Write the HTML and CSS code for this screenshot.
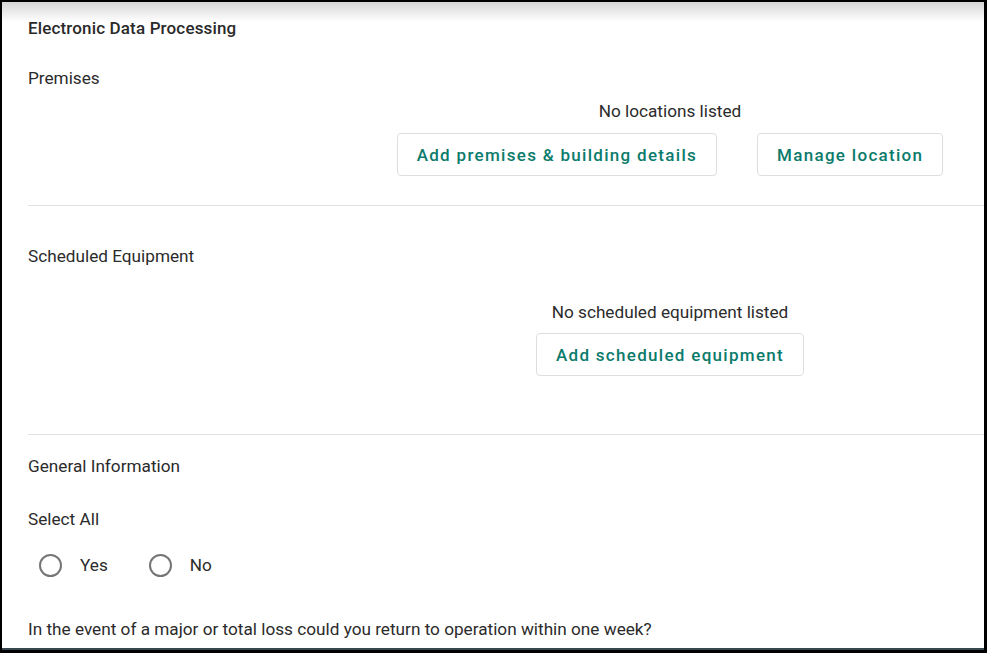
FILE: index.html
```html
<!DOCTYPE html>
<html lang="en">

<head>
    <meta charset="UTF-8">
    <meta name="viewport" content="width=device-width, initial-scale=1.0">
    <title>Electronic Data Processing</title>
    <link rel="stylesheet" href="styles.css">
</head>

<body>
    <div class="frame">
        <div class="page">
            <h1 class="title">Electronic Data Processing</h1>

            <!-- 场所 -->
            <section class="section premises">
                <div class="label">Premises</div>
                <div class="listing">
                    <p class="empty">No locations listed</p>
                    <div class="actions">
                        <button class="btn">Add premises &amp; building details</button>
                        <button class="btn">Manage location</button>
                    </div>
                </div>
            </section>

            <!-- 设备 -->
            <section class="section equipment">
                <div class="label">Scheduled Equipment</div>
                <div class="listing">
                    <p class="empty">No scheduled equipment listed</p>
                    <div class="actions">
                        <button class="btn">Add scheduled equipment</button>
                    </div>
                </div>
            </section>

            <!-- 基本信息 -->
            <section class="section general">
                <div class="label">General Information</div>
                <div class="label select-all">Select All</div>
                <div class="radios">
                    <label class="radio"><span class="circle"></span>Yes</label>
                    <label class="radio"><span class="circle"></span>No</label>
                </div>
                <div class="label question">In the event of a major or total loss could you return to operation within one week?</div>
            </section>
        </div>
    </div>
</body>

</html>
```

FILE: styles.css
```css
* {
    margin: 0;
    padding: 0;
    box-sizing: border-box;
}

html,
body {
    height: 100%;
}

body {
    background-color: #000;
    font-family: Roboto, "Liberation Sans", sans-serif;
    color: #2b2b2b;
    font-size: 17.2px;
    overflow: hidden;
}

.frame {
    height: 648px;
    margin: 2px 3px 0 2px;
    background: linear-gradient(#d6d6d6, #fff 20px);
    border-bottom: 2px solid #37474f;
    overflow: hidden;
}

.page {
    padding: 16px 0 0 26px;
}

.title {
    font-size: 17px;
    font-weight: 500;
    line-height: 20px;
    letter-spacing: 0.15px;
    color: #2a2a2a;
}

.label {
    line-height: 24px;
}

.section {
    border-bottom: 1px solid #e2e2e2;
}

.premises {
    padding: 28px 0 29px;
}

.equipment {
    padding: 38px 0 58px;
}

.general {
    padding-top: 19px;
    border-bottom: none;
}

.listing {
    margin-left: 328px;
    display: flex;
    flex-direction: column;
    align-items: center;
}

.premises .listing {
    margin-top: 9px;
}

.equipment .listing {
    margin-top: 32px;
}

.empty {
    line-height: 24px;
    margin-bottom: 10px;
}

.equipment .empty {
    margin-bottom: 9px;
}

.actions {
    display: flex;
    gap: 40px;
}

.btn {
    height: 43px;
    padding: 0 19px 0 19px;
    background-color: #fff;
    border: 1px solid #dedede;
    border-radius: 4px;
    font-family: Roboto, "Liberation Sans", sans-serif;
    font-size: 17px;
    font-weight: 500;
    letter-spacing: 1.3px;
    color: #0b7b6b;
}

.select-all {
    margin-top: 29px;
}

.radios {
    display: flex;
    gap: 41px;
    margin: 14px 0 0 11px;
    height: 40px;
    align-items: center;
}

.radio {
    display: flex;
    align-items: center;
    gap: 18px;
    line-height: 24px;
}

.circle {
    width: 23px;
    height: 23px;
    border: 2px solid #757575;
    border-radius: 50%;
}

.question {
    margin-top: 32px;
}
```
